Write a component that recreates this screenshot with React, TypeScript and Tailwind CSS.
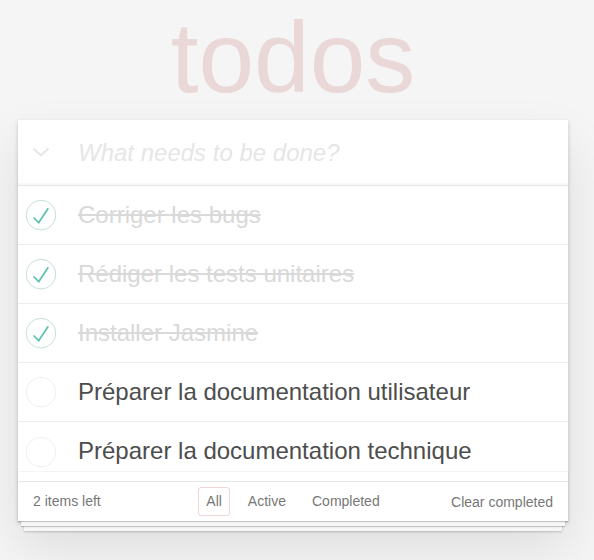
const todos = [
  { id: 1, title: "Corriger les bugs", completed: true },
  { id: 2, title: "Rédiger les tests unitaires", completed: true },
  { id: 3, title: "Installer Jasmine", completed: true },
  { id: 4, title: "Préparer la documentation utilisateur", completed: false },
  { id: 5, title: "Préparer la documentation technique", completed: false },
];

function Toggle({ checked }: { checked: boolean }) {
  return (
    <svg width="40" height="40" viewBox="-10 -18 100 135" className="shrink-0">
      <circle
        cx="50"
        cy="50"
        r="50"
        fill="none"
        stroke={checked ? "#bddad5" : "#ededed"}
        strokeWidth="3"
      />
      {checked && (
        <path fill="#5dc2af" d="M72 25L42 71 27 56l-4 4 20 20 34-52z" />
      )}
    </svg>
  );
}

export default function App() {
  const left = todos.filter((t) => !t.completed).length;

  return (
    <div className="min-h-screen bg-[#f5f5f5] font-['Liberation_Sans',Arial,sans-serif] text-[14px] text-[#4d4d4d]">
      <div className="pt-[7px] pl-[18px]">
        <h1 className="w-[550px] h-[100px] mb-[13px] text-center text-[100px] leading-[100px] font-thin text-[rgba(175,47,47,0.15)]">
          todos
        </h1>

        <section className="relative w-[550px] bg-white shadow-[0_2px_4px_rgba(0,0,0,0.2),0_25px_50px_rgba(0,0,0,0.1)]">
          {/* header / new todo */}
          <header className="flex items-center h-[66px] border-b border-[#e6e6e6] shadow-[inset_0_-2px_1px_rgba(0,0,0,0.03)]">
            <div className="w-[60px] flex pl-[14px]">
              <svg width="18" height="11" viewBox="0 0 18 11">
                <polyline
                  points="1.5,1.5 9,8.5 16.5,1.5"
                  fill="none"
                  stroke="#e6e6e6"
                  strokeWidth="2"
                />
              </svg>
            </div>
            <span className="text-[24px] italic text-[#e6e6e6] leading-[1.4]">
              What needs to be done?
            </span>
          </header>

          <ul>
            {todos.map((t) => (
              <li
                key={t.id}
                className="flex items-center h-[59px] border-b border-[#ededed] last:border-b-0"
              >
                <div className="w-[60px]">
                  <Toggle checked={t.completed} />
                </div>
                <span
                  className={
                    t.completed
                      ? "text-[24px] leading-[1.2] text-[#d9d9d9] line-through"
                      : "text-[24px] leading-[1.2] text-[#4d4d4d]"
                  }
                >
                  {t.title}
                </span>
              </li>
            ))}
          </ul>

          <footer className="relative grid grid-cols-[1fr_auto_1fr] items-center h-[40px] px-[15px] border-t border-[#e6e6e6] text-[#777]">
            <div className="pointer-events-none absolute inset-x-0 bottom-0 h-[50px] border-t border-[#f4f4f4] shadow-[0_1px_1px_rgba(0,0,0,0.2),0_8px_0_-3px_#f6f6f6,0_9px_1px_-3px_rgba(0,0,0,0.2),0_16px_0_-6px_#f6f6f6,0_17px_2px_-6px_rgba(0,0,0,0.2)]" />
            <span className="relative">{left} items left</span>
            <ul className="relative flex gap-[10px]">
              <li className="px-[7px] py-[3px] border border-[rgba(175,47,47,0.2)] rounded-[3px]">
                All
              </li>
              <li className="px-[7px] py-[3px] border border-transparent">Active</li>
              <li className="px-[7px] py-[3px] border border-transparent">Completed</li>
            </ul>
            <span className="relative text-right pt-[1px]">Clear completed</span>
          </footer>
        </section>
      </div>
    </div>
  );
}
